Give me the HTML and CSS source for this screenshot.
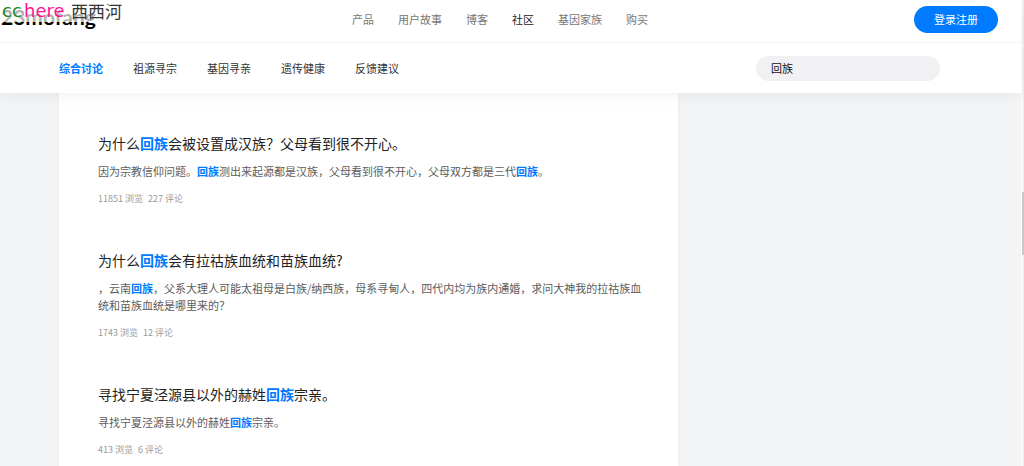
FILE: index.html
```html
<!DOCTYPE html>
<html lang="zh-CN">
<head>
<meta charset="utf-8">
<meta name="viewport" content="width=device-width, initial-scale=1">
<title>综合讨论</title>
<link rel="stylesheet" href="styles.css">
</head>
<body>
<div class="page">
  <header class="header">
    <div class="topbar">
      <a class="logo" href="#">23mofang</a>
      <div class="watermark"><span class="wm-cc">cc</span><span class="wm-here">here</span><span class="wm-name">西西河</span></div>
      <nav class="main-nav">
        <a href="#">产品</a><a href="#">用户故事</a><a href="#">博客</a><a class="current" href="#">社区</a><a href="#">基因家族</a><a href="#">购买</a>
      </nav>
      <button class="login" type="button">登录注册</button>
    </div>
    <div class="subbar">
      <nav class="sub-nav">
        <a class="active" href="#">综合讨论</a><a href="#">祖源寻宗</a><a href="#">基因寻亲</a><a href="#">遗传健康</a><a href="#">反馈建议</a>
      </nav>
      <input class="search" type="text" value="回族" aria-label="搜索">
    </div>
  </header>
  <main class="results">
    <article class="post">
      <h2><a href="#">为什么<em>回族</em>会被设置成汉族？父母看到很不开心。</a></h2>
      <p class="excerpt">因为宗教信仰问题。<em>回族</em>测出来起源都是汉族，父母看到很不开心，父母双方都是三代<em>回族</em>。</p>
      <p class="meta"><span>11851 浏览</span><span>227 评论</span></p>
    </article>
    <article class="post">
      <h2><a href="#">为什么<em>回族</em>会有拉祜族血统和苗族血统?</a></h2>
      <p class="excerpt">，云南<em>回族</em>，父系大理人可能太祖母是白族/纳西族，母系寻甸人，四代内均为族内通婚，求问大神我的拉祜族血统和苗族血统是哪里来的？</p>
      <p class="meta"><span>1743 浏览</span><span>12 评论</span></p>
    </article>
    <article class="post">
      <h2><a href="#">寻找宁夏泾源县以外的赫姓<em>回族</em>宗亲。</a></h2>
      <p class="excerpt">寻找宁夏泾源县以外的赫姓<em>回族</em>宗亲。</p>
      <p class="meta"><span>413 浏览</span><span>6 评论</span></p>
    </article>
  </main>
</div>
<div class="scroll-track"><div class="scroll-thumb"></div></div>
</body>
</html>
```
FILE: styles.css
```css
* {
  box-sizing: border-box;
}

body {
  margin: 0;
  display: flex;
  min-height: 100vh;
  background: #f3f4f6;
  color: #333;
  font-family: "Noto Sans CJK SC", sans-serif;
  font-size: 11px;
}

a {
  color: inherit;
  text-decoration: none;
}

em {
  color: #007bff;
  font-style: normal;
  font-weight: 700;
}

.page {
  flex: 1;
  min-width: 0;
}

.header {
  position: relative;
  background: #fff;
  box-shadow: 0 2px 16px rgba(0, 0, 0, 0.06);
}

.topbar {
  position: relative;
  display: flex;
  align-items: center;
  height: 43px;
  padding: 0 23px 4px 0;
  border-bottom: 1px solid #f3f3f3;
}

.logo {
  width: 352px;
  padding: 0 0 4px 1px;
  color: #000;
  font: 700 21px/24px Lato, sans-serif;
}

.watermark {
  position: absolute;
  top: 0;
  left: 0;
  display: flex;
  width: 124px;
  height: 22px;
  padding-left: 2px;
  background: rgba(255, 255, 255, 0.7);
  font: 18px/22px "DejaVu Sans", sans-serif;
}

.wm-cc {
  width: 22px;
  color: #228b22;
}

.wm-here {
  width: 47px;
  color: #ff1493;
}

.wm-name {
  font: 17px/22px "Noto Sans CJK SC", sans-serif;
  color: #333;
}

.main-nav {
  display: flex;
  gap: 24px;
  color: #777;
}

.main-nav .current {
  color: #222;
}

.login {
  width: 84px;
  height: 27px;
  margin-left: auto;
  padding: 0;
  border: 0;
  border-radius: 14px;
  background: #007bff;
  color: #fff;
  font: inherit;
}

.subbar {
  display: flex;
  align-items: center;
  justify-content: space-between;
  height: 50px;
  padding: 0 81px 0 59px;
}

.sub-nav {
  display: flex;
  gap: 30px;
}

.sub-nav .active {
  color: #007bff;
  font-weight: 700;
}

.search {
  width: 184px;
  height: 25px;
  padding: 0 15px;
  border: 0;
  border-radius: 13px;
  background: #f1f1f4;
  color: #111;
  font: inherit;
}

.results {
  width: 619px;
  margin-left: 59px;
  padding-top: 20px;
  background: #fff;
  box-shadow: 0 0 4px rgba(0, 0, 0, 0.04);
}

.post {
  padding: 20px 32px 25px 39px;
}

.post:last-child {
  padding-bottom: 10px;
}

.post h2 {
  margin: 0 0 10px;
  color: #222;
  font-size: 14px;
  font-weight: 400;
  line-height: 20px;
}

.excerpt {
  margin: 0 0 13px;
  color: #5c5c5c;
  line-height: 17px;
}

.meta {
  display: flex;
  gap: 5px;
  margin: 0;
  color: #999;
  font-size: 9px;
  line-height: 12px;
}

.scroll-track {
  width: 3px;
  padding-top: 192px;
  border-left: 1px solid #fff;
  background: #f1f1f1;
}

.scroll-thumb {
  height: 63px;
  background: #c9c9c9;
}
```
